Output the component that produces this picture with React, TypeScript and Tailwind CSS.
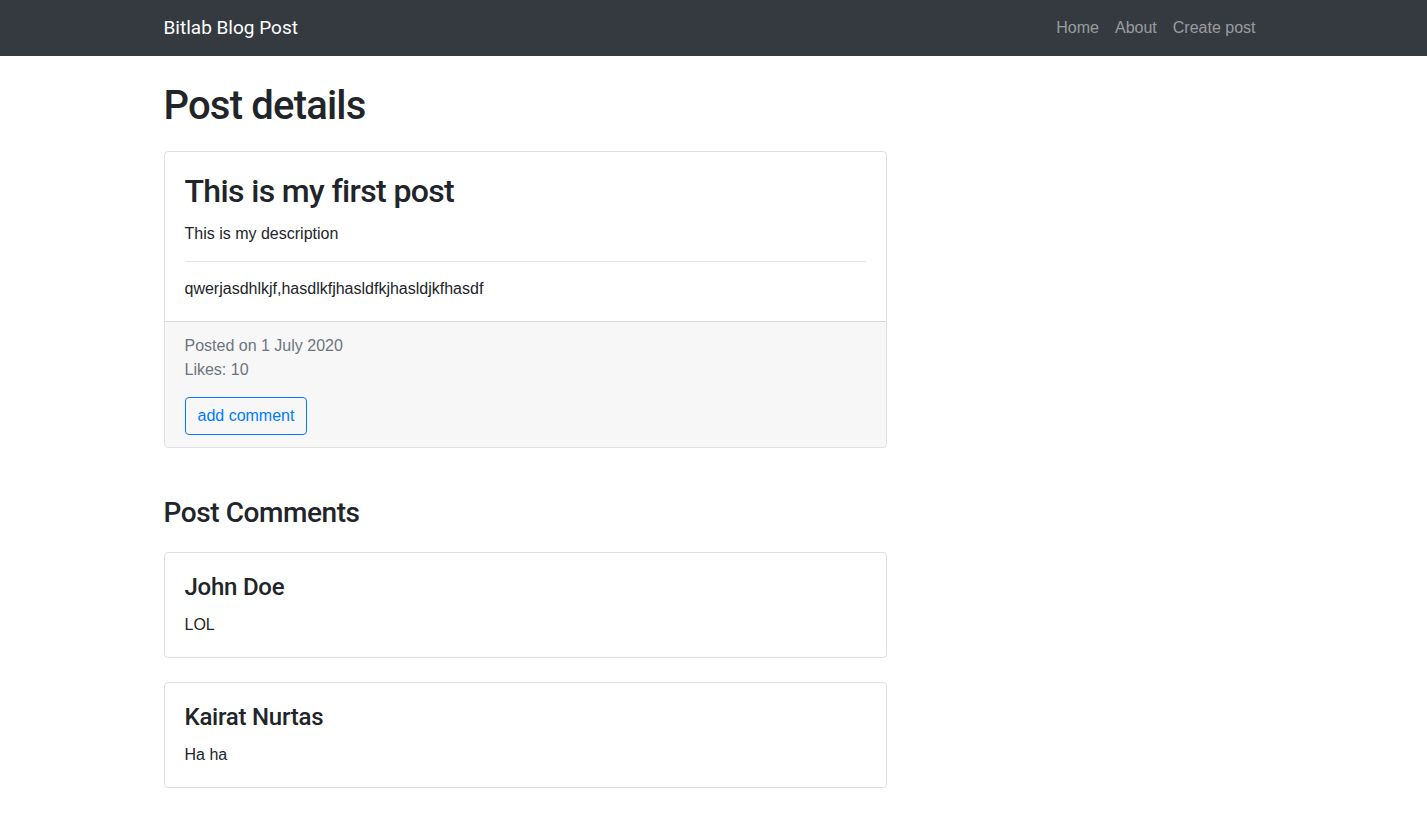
import React from 'react';

const comments = [
  { author: 'John Doe', text: 'LOL' },
  { author: 'Kairat Nurtas', text: 'Ha ha' },
];

const heading = "font-['Roboto',Arial,sans-serif] font-medium";

export default function App() {
  return (
    <div className="min-h-screen bg-white text-[#212529] font-['Liberation_Sans',Arial,sans-serif]">
      <nav className="h-14 bg-[#343a40]">
        <div className="mx-auto flex h-full w-[1100px] items-center justify-between">
          <span className="font-['Roboto',Arial,sans-serif] text-[19px] text-white">Bitlab Blog Post</span>
          <div className="flex">
            <a className="px-2 text-base text-white/50">Home</a>
            <a className="px-2 text-base text-white/50">About</a>
            <a className="px-2 text-base text-white/50">Create post</a>
          </div>
        </div>
      </nav>

      <main className="mx-auto w-[1100px] pb-10">
        <h1 className={`mt-[26px] mb-[21px] text-[40px] leading-[48px] tracking-[-0.02em] ${heading}`}>Post details</h1>

        <div className="w-[723px] rounded border border-black/[0.125]">
          <div className="p-5">
            <h2 className={`mb-3 text-[32px] leading-[38px] tracking-[-0.02em] ${heading}`}>This is my first post</h2>
            <p className="text-base leading-6">This is my description</p>
            <hr className="mt-[15px] mb-[15px] border-black/10" />
            <p className="text-base leading-6">qwerjasdhlkjf,hasdlkfjhasldfkjhasldjkfhasdf</p>
          </div>
          <div className="rounded-b border-t border-black/[0.125] bg-[#f7f7f7] px-5 py-3 text-base leading-6 text-[#6c757d]">
            <p>Posted on 1 July 2020</p>
            <p>Likes: 10</p>
            <button className="mt-[15px] rounded border border-[#007bff] px-3 py-1.5 text-base leading-6 text-[#007bff]">
              add comment
            </button>
          </div>
        </div>

        <h3 className={`mt-12 mb-[22px] text-[28px] leading-[34px] tracking-[-0.015em] ${heading}`}>Post Comments</h3>

        <div className="flex w-[723px] flex-col gap-6">
          {comments.map((c, i) => (
            <div key={i} className="rounded border border-black/[0.125] p-5">
              <h4 className={`mb-[11px] text-2xl leading-[29px] tracking-[-0.01em] ${heading}`}>{c.author}</h4>
              <p className="text-base leading-6">{c.text}</p>
            </div>
          ))}
        </div>
      </main>
    </div>
  );
}
